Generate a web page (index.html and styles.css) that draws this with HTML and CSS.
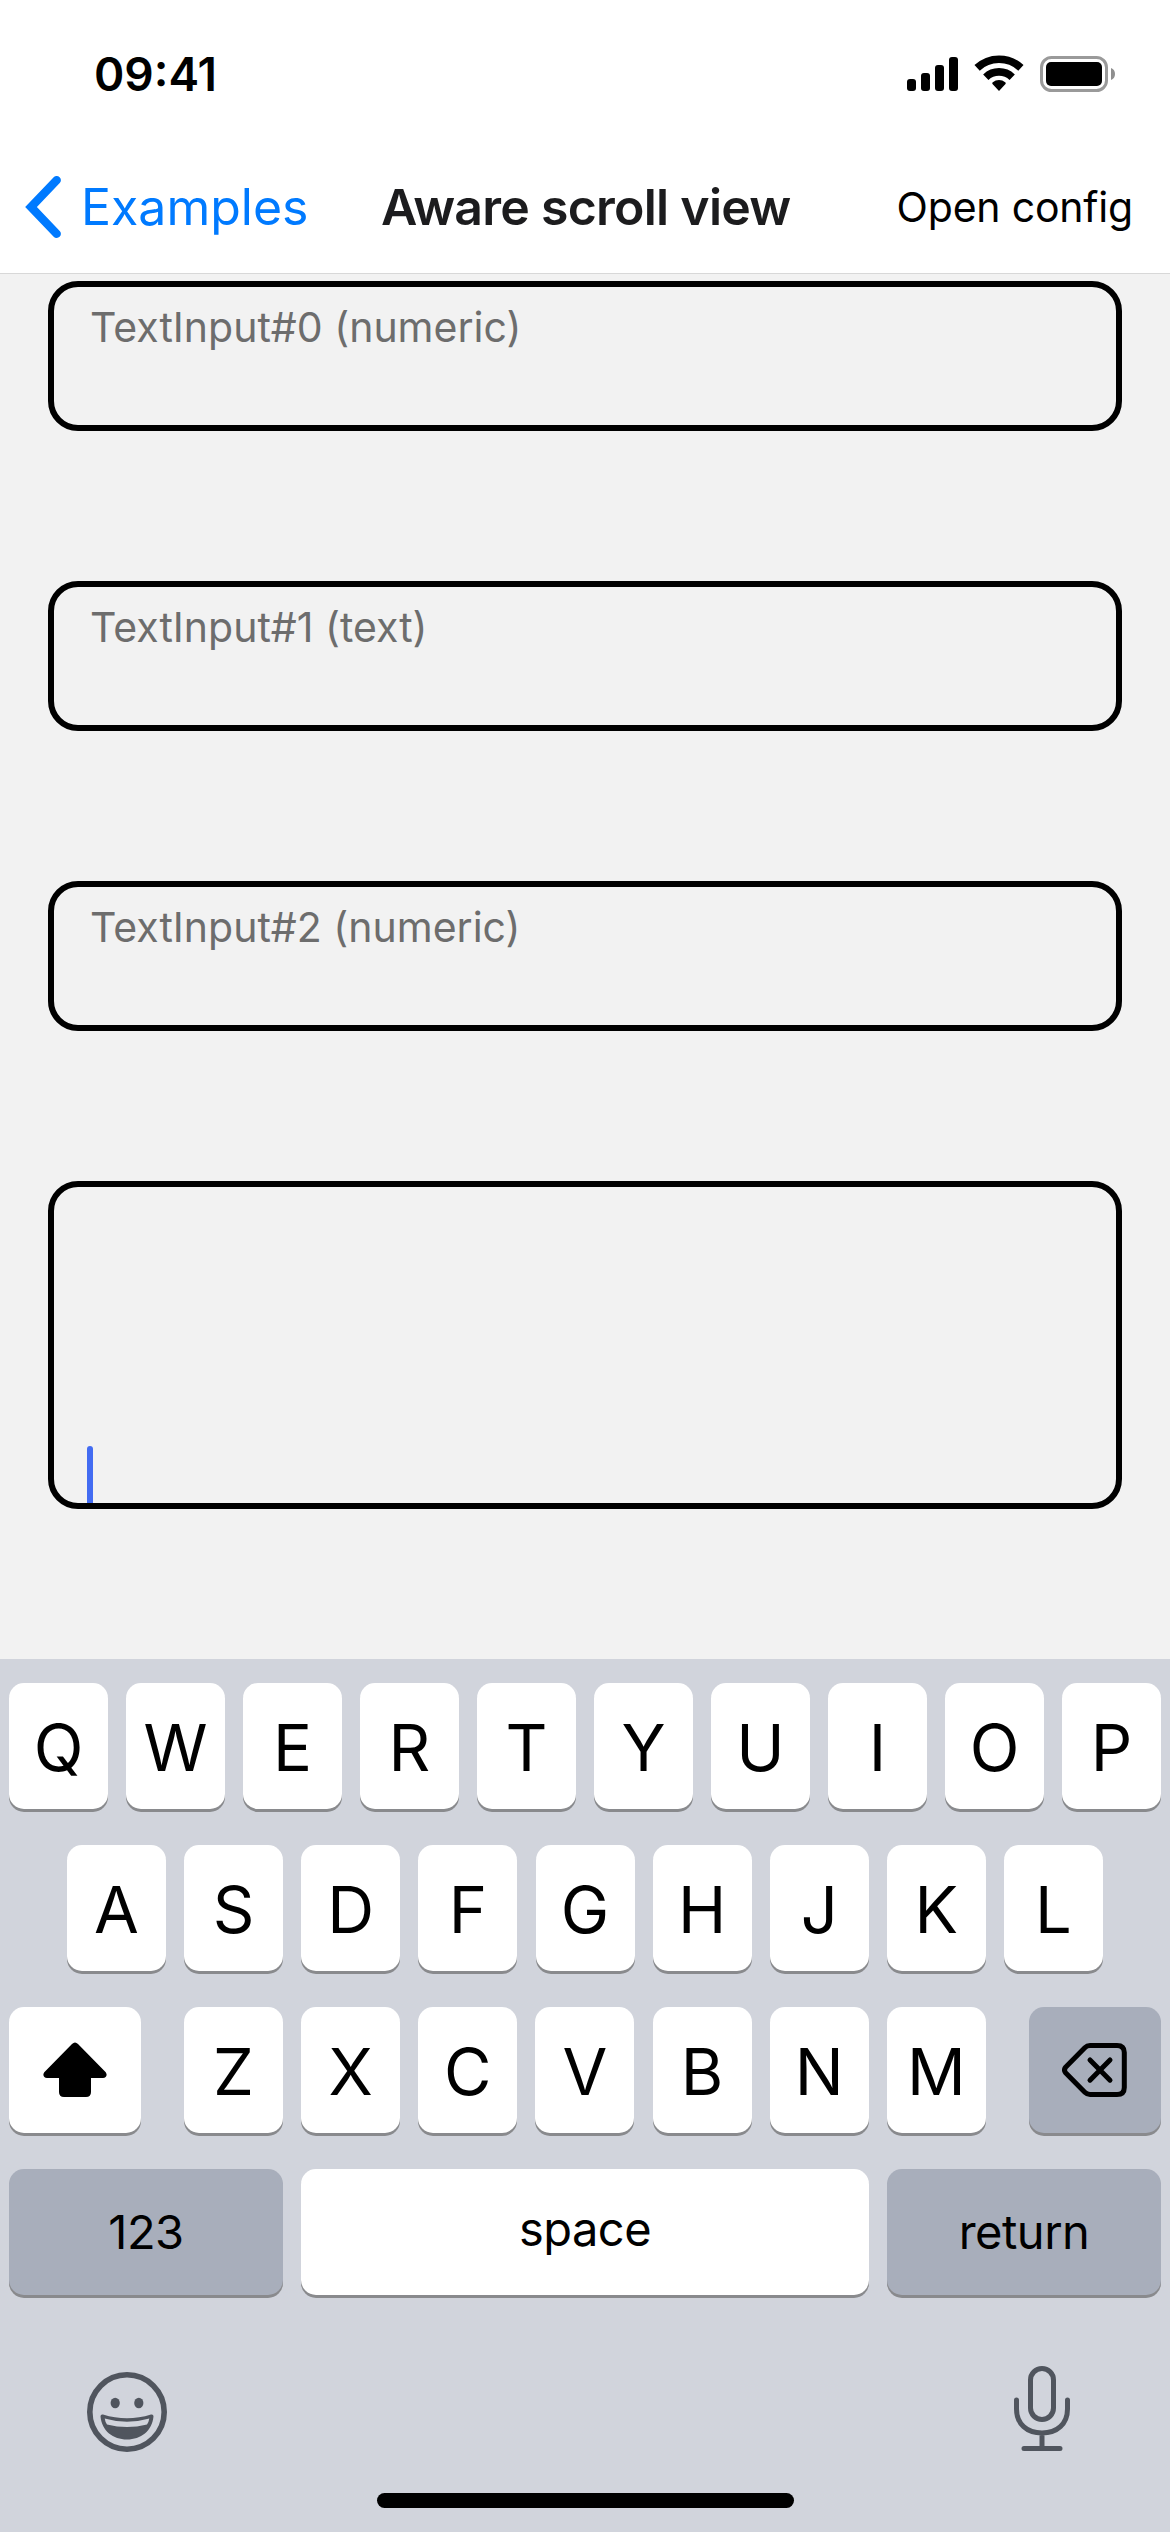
FILE: index.html
```html
<!DOCTYPE html>
<html lang="en">
<head>
<meta charset="utf-8">
<title>Aware scroll view</title>
<link rel="stylesheet" href="styles.css">
</head>
<body>
<div class="screen">
  <header class="header">
    <div class="status">
      <span class="time">09:41</span>
      <svg class="indicators" width="210" height="44" viewBox="906 55 210 44">
        <rect x="907" y="79" width="9" height="12" rx="3"/>
        <rect x="921" y="73" width="9" height="18" rx="3"/>
        <rect x="935" y="65" width="9" height="26" rx="3"/>
        <rect x="949" y="57" width="9" height="34" rx="3"/>
        <g fill="none" stroke="#000" stroke-width="7.7">
          <path d="M977.1 67.900A32 32 0 0 1 1020.900 67.900"/>
          <path d="M985.800 77.200A19.200 19.200 0 0 1 1012.200 77.200"/>
        </g>
        <path d="M999 91L992.500 84Q991.700 82.900 992.800 82.200A10 10 0 0 1 1005.200 82.200Q1006.300 82.900 1005.500 84Z"/>
        <rect x="1041.500" y="57.500" width="65" height="33" rx="10" fill="none" stroke="#9a9a9a" stroke-width="3"/>
        <rect x="1046" y="62" width="56" height="24" rx="5"/>
        <path d="M1111 68Q1115 69.500 1115 74T1111 80Z" fill="#8f8f8f"/>
      </svg>
    </div>
    <nav class="nav">
      <a class="back">
        <svg class="chevron" width="36" height="62" viewBox="0 0 36 62"><path d="M31.700 4.200L6 31L31.700 57.800" fill="none" stroke="#007aff" stroke-width="8.400" stroke-linecap="round" stroke-linejoin="miter"/></svg>
        <span class="back-label">Examples</span>
      </a>
      <h1 class="title">Aware scroll view</h1>
      <span class="action">Open config</span>
    </nav>
  </header>
  <main class="content">
    <div class="field"><span class="hint">TextInput#0 (numeric)</span></div>
    <div class="field"><span class="hint">TextInput#1 (text)</span></div>
    <div class="field"><span class="hint">TextInput#2 (numeric)</span></div>
    <div class="field field-active"><span class="caret"></span></div>
  </main>
  <section class="keyboard">
    <div class="row">
      <span class="key">Q</span><span class="key">W</span><span class="key">E</span><span class="key">R</span><span class="key">T</span><span class="key">Y</span><span class="key">U</span><span class="key">I</span><span class="key">O</span><span class="key">P</span>
    </div>
    <div class="row row-home">
      <span class="key">A</span><span class="key">S</span><span class="key">D</span><span class="key">F</span><span class="key">G</span><span class="key">H</span><span class="key">J</span><span class="key">K</span><span class="key">L</span>
    </div>
    <div class="row">
      <span class="key key-side"><svg width="64" height="56" viewBox="0 0 64 56"><path d="M29 2Q32-1 35 2L62 29.500C65 32.500 63.500 36 60 36H48V50Q48 55 43 55H21Q16 55 16 50V36H4C.5 36-1 32.500 2 29.500Z"/></svg></span>
      <div class="letters">
        <span class="key">Z</span><span class="key">X</span><span class="key">C</span><span class="key">V</span><span class="key">B</span><span class="key">N</span><span class="key">M</span>
      </div>
      <span class="key key-side key-dark"><svg width="66" height="54" viewBox="0 0 66 54"><g fill="none" stroke="#000" stroke-width="5" stroke-linecap="round" stroke-linejoin="round"><path d="M28 2.500H55Q62.300 2.500 62.300 9.500V44.500Q62.300 51.500 55 51.500H28Q25 51.500 22.800 49.300L3.800 30Q1.200 27 3.800 24L22.800 4.700Q25 2.500 28 2.500Z"/><path d="M28 17L48 37.200M48 17L28 37.200"/></g></svg></span>
    </div>
    <div class="row">
      <span class="key key-wide key-dark">123</span>
      <span class="key key-wide key-space">space</span>
      <span class="key key-wide key-dark">return</span>
    </div>
    <div class="tools">
      <svg width="80" height="80" viewBox="0 0 80 80">
        <circle cx="40" cy="40" r="37.200" fill="none" stroke="#50555e" stroke-width="5.600"/>
        <ellipse cx="28.200" cy="31" rx="4.600" ry="5.300" fill="#50555e"/>
        <ellipse cx="51.800" cy="31" rx="4.600" ry="5.300" fill="#50555e"/>
        <path d="M16 42.500Q40 50 64 42.500Q66.500 42 66.500 44.500C65 59 54 67.500 40 67.500S15 59 13.500 44.500Q13.500 42 16 42.500Z" fill="#50555e"/>
        <path d="M17.700 46.500Q40 53 62.300 46.500Q61.800 50 60 52.500Q40 57.500 20 52.500Q18.200 50 17.700 46.500Z" fill="#d1d4dc"/>
      </svg>
      <svg class="mic" width="56" height="86" viewBox="0 0 56 86"><g fill="none" stroke="#50555e" stroke-width="5" stroke-linecap="round"><rect x="16.500" y="2.500" width="23" height="51" rx="11.500"/><path d="M2.500 34V43C2.500 58 13 67 28 67S53.500 58 53.500 43V34M28 67V82M10 82.500H46"/></g></svg>
    </div>
    <div class="home"></div>
  </section>
</div>
</body>
</html>
```

FILE: styles.css
```css
* { box-sizing: border-box; }
body {
  margin: 0;
  font-family: Inter, "Liberation Sans", sans-serif;
  color: #000;
}
.screen {
  width: 1170px;
  height: 2532px;
  display: flex;
  flex-direction: column;
  overflow: hidden;
  background: #f2f2f2;
}
.header {
  height: 274px;
  flex: none;
  background: #fff;
  border-bottom: 1px solid #d8d8d8;
}
.status {
  height: 141px;
  padding: 0 54px 0 94px;
  display: flex;
  justify-content: space-between;
}
.time {
  margin-top: 45px;
  line-height: 58px;
  font-size: 46px;
  font-weight: 600;
}
.indicators { margin-top: 55px; }
.nav {
  height: 132px;
  padding: 0 37px 0 25px;
  display: grid;
  grid-template-columns: 356px 1fr auto;
  align-items: center;
}
.back {
  display: flex;
  align-items: center;
  gap: 20px;
}
.back-label, .title, .action { white-space: nowrap; line-height: 60px; }
.back-label {
  font-size: 50px;
  color: #007aff;
}
.title {
  margin: 0;
  font-size: 50px;
  font-weight: 600;
  letter-spacing: -0.75px;
  color: #1c1c1e;
}
.action { font-size: 41px; letter-spacing: -0.2px; }
.content {
  flex: none;
  height: 1385px;
  padding: 7px 48px 0;
  display: flex;
  flex-direction: column;
  gap: 150px;
}
.field {
  height: 150px;
  flex: none;
  padding: 15px 36px;
  border: 6px solid #000;
  border-radius: 30px;
}
.hint {
  display: block;
  line-height: 50px;
  font-size: 41px;
  color: #6d6d6d;
}
.field-active {
  height: 328px;
  padding: 0 33px;
  display: flex;
  align-items: flex-end;
}
.caret {
  width: 6px;
  height: 57px;
  border-radius: 3px 3px 0 0;
  background: #436cf2;
}
.keyboard {
  flex: 1;
  padding: 24px 9px 0;
  display: flex;
  flex-direction: column;
  background: #d1d4dc;
}
.row {
  height: 126px;
  margin-bottom: 36px;
  flex: none;
  display: flex;
  justify-content: space-between;
}
.row-home { padding: 0 58px; }
.letters {
  width: 802px;
  display: flex;
  justify-content: space-between;
}
.key {
  width: 99px;
  height: 126px;
  display: flex;
  align-items: center;
  justify-content: center;
  border-radius: 15px;
  background: #fff;
  box-shadow: 0 3px 0 #898a8d;
  font-size: 65px;
  line-height: 80px;
  padding-top: 3px;
}
.key-side { width: 132px; padding: 0; }
.key-dark { background: #a8aebb; }
.key-wide {
  width: 274px;
  font-size: 47px;
  letter-spacing: -0.5px;
  padding-top: 0;
}
.key-space { width: 568px; padding: 0 0 7px; }
.tools {
  height: 86px;
  margin-top: 35px;
  padding: 0 91px 0 78px;
  display: flex;
  justify-content: space-between;
  align-items: flex-end;
}
.home {
  width: 417px;
  height: 15px;
  margin: 41px auto 0;
  border-radius: 8px;
  background: #000;
}
```
